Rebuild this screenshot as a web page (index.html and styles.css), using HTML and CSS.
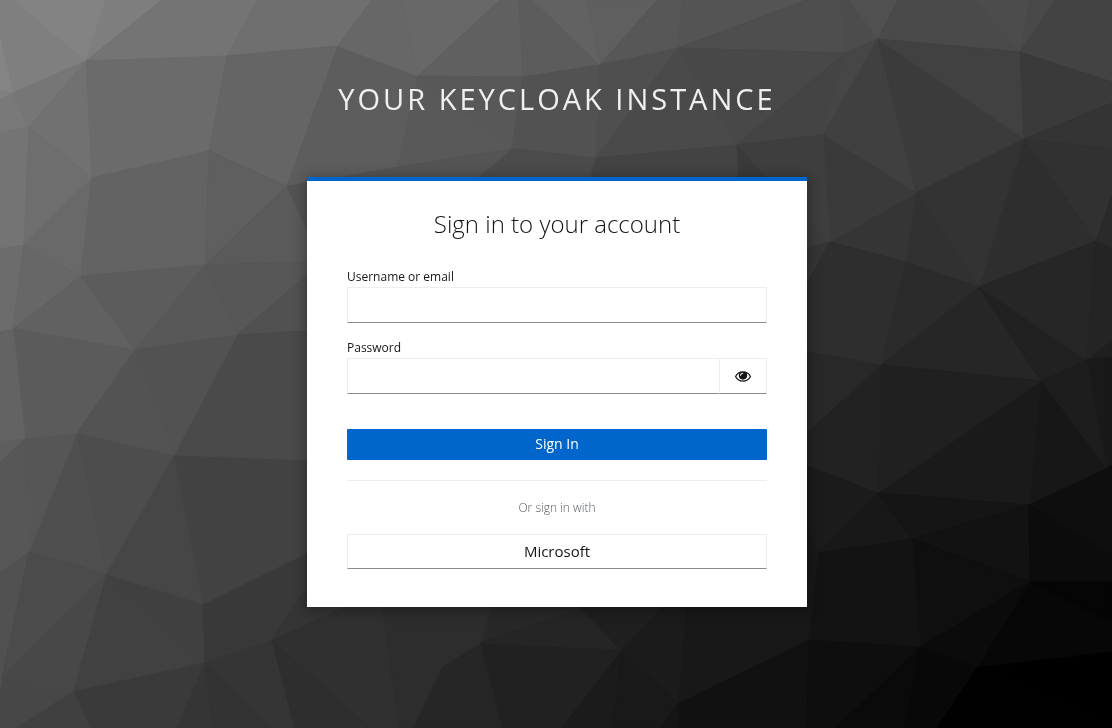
FILE: index.html
```html
<!DOCTYPE html>
<html lang="en">
<head>
<meta charset="utf-8">
<meta name="viewport" content="width=device-width, initial-scale=1">
<title>Sign in to your account</title>
<link rel="stylesheet" href="styles.css">
</head>
<body>
<svg class="backdrop" viewBox="0 0 1112 728" preserveAspectRatio="xMidYMid slice" aria-hidden="true">
<path color="#7f7f7f" d="M0 0 13 0 86 61 13 93 0 38z"/>
<path color="#838383" d="M13 0 106 0 86 61z"/>
<path color="#7e7e7e" d="M106 0 162 0 86 61z"/>
<path color="#747474" d="M162 0 258 0 227 56 86 61z"/>
<path color="#6f6f6f" d="M258 0 372 0 338 46 227 56z"/>
<path color="#858585" d="M0 38 13 93 0 91z"/>
<path color="#808080" d="M0 91 13 93 0 100z"/>
<path color="#797979" d="M0 100 13 93 29 127 0 133z"/>
<path color="#767676" d="M13 93 86 61 29 127z"/>
<path color="#717171" d="M86 61 92 178 29 127z"/>
<path color="#6b6b6b" d="M86 61 227 56 209 151 92 178z"/>
<path color="#656565" d="M227 56 338 46 287 186 209 151z"/>
<path color="#747474" d="M0 133 29 127 24 245 0 249z"/>
<path color="#6e6e6e" d="M29 127 92 178 24 245z"/>
<path color="#696969" d="M92 178 81 276 24 245z"/>
<path color="#636363" d="M92 178 209 151 205 265 81 276z"/>
<path color="#5f5f5f" d="M209 151 287 186 205 265z"/>
<path color="#5a5a5a" d="M287 186 320 250 307 262 205 265z"/>
<path color="#5d5d5d" d="M338 46 418 76 398 167 344 177 287 186z"/>
<path color="#676767" d="M338 46 372 0 402 0 418 76z"/>
<path color="#686868" d="M402 0 500 0 418 76z"/>
<path color="#606060" d="M500 0 519 0 523 77 418 76z"/>
<path color="#5c5c5c" d="M519 0 533 0 600 65 523 77z"/>
<path color="#626262" d="M533 0 587 0 600 65z"/>
<path color="#5f5f5f" d="M587 0 657 0 600 65z"/>
<path color="#575757" d="M657 0 682 0 678 48 600 65z"/>
<path color="#545454" d="M682 0 807 0 678 48z"/>
<path color="#4e4e4e" d="M807 0 841 0 845 53 678 48z"/>
<path color="#4c4c4c" d="M841 0 849 0 878 39 845 53z"/>
<path color="#505050" d="M849 0 898 0 878 39z"/>
<path color="#4a4a4a" d="M898 0 974 0 1020 52 878 39z"/>
<path color="#4c4c4c" d="M974 0 1031 0 1020 52z"/>
<path color="#494949" d="M1031 0 1055 0 1020 52z"/>
<path color="#434343" d="M1055 0 1112 0 1112 82 1020 52z"/>
<path color="#585858" d="M418 76 523 77 512 149z"/>
<path color="#595959" d="M418 76 512 149 398 167z"/>
<path color="#525252" d="M523 77 600 65 596 158 512 149z"/>
<path color="#4f4f4f" d="M600 65 678 48 596 158z"/>
<path color="#4a4a4a" d="M678 48 736 145 596 158z"/>
<path color="#484848" d="M678 48 845 53 736 145z"/>
<path color="#444444" d="M845 53 823 135 736 145z"/>
<path color="#464646" d="M845 53 878 39 823 135z"/>
<path color="#404040" d="M878 39 916 193 823 135z"/>
<path color="#3b3b3b" d="M878 39 1024 139 916 193z"/>
<path color="#414141" d="M878 39 1020 52 1024 139z"/>
<path color="#3a3a3a" d="M1020 52 1112 82 1112 103 1024 139z"/>
<path color="#343434" d="M1024 139 1112 103 1112 149z"/>
<path color="#313131" d="M1024 139 1112 149 1112 195 1096 241z"/>
<path color="#2e2e2e" d="M1024 139 1096 241 979 287z"/>
<path color="#333333" d="M1024 139 979 287 916 193z"/>
<path color="#313131" d="M916 193 979 287 906 262z"/>
<path color="#353535" d="M916 193 906 262 830 242z"/>
<path color="#3a3a3a" d="M823 135 916 193 830 242z"/>
<path color="#3e3e3e" d="M823 135 830 242 807 220 765 177 736 145z"/>
<path color="#3a3a3a" d="M736 145 765 177 738 177z"/>
<path color="#434343" d="M596 158 736 145 738 177 590 177z"/>
<path color="#4b4b4b" d="M512 149 596 158 590 177 478 177z"/>
<path color="#545454" d="M398 167 512 149 478 177 344 177z"/>
<path color="#535353" d="M287 186 344 177 344 230 307 230z"/>
<path color="#3c3c3c" d="M807 220 830 242 807 248z"/>
<path color="#353535" d="M807 248 830 242 807 284z"/>
<path color="#2e2e2e" d="M830 242 906 262 881 365 807 352 807 284z"/>
<path color="#2b2b2b" d="M906 262 979 287 881 365z"/>
<path color="#262626" d="M979 287 1041 381 881 365z"/>
<path color="#212121" d="M979 287 1087 360 1041 381z"/>
<path color="#262626" d="M979 287 1096 241 1087 360z"/>
<path color="#242424" d="M1096 241 1112 247 1112 341 1087 360z"/>
<path color="#2a2a2a" d="M1112 195 1112 247 1096 241z"/>
<path color="#1f1f1f" d="M1087 360 1112 341 1112 357z"/>
<path color="#191919" d="M1087 360 1112 357 1112 465 1106 469z"/>
<path color="#1d1d1d" d="M1041 381 1087 360 1106 469z"/>
<path color="#171717" d="M1041 381 1106 469 1029 505z"/>
<path color="#1a1a1a" d="M1041 381 1029 505 878 493z"/>
<path color="#202020" d="M881 365 1041 381 878 493z"/>
<path color="#222222" d="M881 365 878 493 807 466 807 432z"/>
<path color="#282828" d="M807 352 881 365 807 432z"/>
<path color="#1b1b1b" d="M807 466 878 493 818 553 807 530z"/>
<path color="#181818" d="M878 493 912 539 818 553z"/>
<path color="#151515" d="M878 493 1029 505 912 539z"/>
<path color="#121212" d="M912 539 1029 505 1030 582z"/>
<path color="#0f0f0f" d="M912 539 1030 582 920 647z"/>
<path color="#131313" d="M818 553 912 539 920 647 808 640z"/>
<path color="#0e0e0e" d="M1029 505 1106 469 1112 465 1112 556z"/>
<path color="#0c0c0c" d="M1029 505 1112 556 1112 582 1030 582z"/>
<path color="#050505" d="M1030 582 1112 582 1112 623z"/>
<path color="#070707" d="M1030 582 1112 623 1112 652 977 668z"/>
<path color="#0b0b0b" d="M1030 582 977 668 920 647z"/>
<path color="#080808" d="M920 647 977 668 937 728 905 728z"/>
<path color="#0a0a0a" d="M920 647 905 728 834 728z"/>
<path color="#0e0e0e" d="M808 640 920 647 834 728 806 728z"/>
<path color="#111111" d="M808 640 806 728 678 728 678 703z"/>
<path color="#000000" d="M977 668 1112 652 1112 728z"/>
<path color="#010101" d="M977 668 1112 728 937 728z"/>
<path color="#181818" d="M807 530 818 553 808 640 678 703 686 607z"/>
<path color="#1b1b1b" d="M662 607 686 607 678 703 621 650z"/>
<path color="#191919" d="M621 650 678 703 661 728 612 728z"/>
<path color="#151515" d="M678 703 678 728 661 728z"/>
<path color="#1b1b1b" d="M621 650 612 728 561 728z"/>
<path color="#212121" d="M480 643 621 650 561 728 502 728z"/>
<path color="#262626" d="M480 643 502 728 413 728 442 667z"/>
<path color="#282828" d="M491 606 581 606 581 609 480 643z"/>
<path color="#252525" d="M480 643 581 609 621 650z"/>
<path color="#1f1f1f" d="M578 606 662 606 621 650z"/>
<path color="#2d2d2d" d="M382 606 491 607 480 643 442 667 413 728 398 728z"/>
<path color="#303030" d="M271 640 346 606 382 606 398 728 370 728z"/>
<path color="#2e2e2e" d="M271 640 370 728 294 728z"/>
<path color="#353535" d="M205 662 271 640 294 728 272 728z"/>
<path color="#333333" d="M205 662 272 728 212 728z"/>
<path color="#353535" d="M205 662 212 728 176 728z"/>
<path color="#3a3a3a" d="M73 691 205 662 176 728 90 728z"/>
<path color="#404040" d="M15 728 73 691 90 728z"/>
<path color="#474747" d="M2 677 73 691 15 728 0 728 0 690z"/>
<path color="#414141" d="M106 574 205 662 73 691z"/>
<path color="#404040" d="M106 574 203 604 205 662z"/>
<path color="#393939" d="M203 604 307 553 307 587 271 640 205 662z"/>
<path color="#353535" d="M307 587 346 606 271 640z"/>
<path color="#424242" d="M174 455 307 460 307 553 203 604z"/>
<path color="#464646" d="M174 455 203 604 106 574z"/>
<path color="#4d4d4d" d="M77 433 174 455 106 574z"/>
<path color="#4f4f4f" d="M77 433 106 574 29 552z"/>
<path color="#565656" d="M25 438 77 433 29 552z"/>
<path color="#575757" d="M0 462 25 438 29 552 0 573z"/>
<path color="#5e5e5e" d="M0 441 25 438 0 462z"/>
<path color="#515151" d="M0 573 29 552 2 677 0 690z"/>
<path color="#4b4b4b" d="M29 552 106 574 2 677z"/>
<path color="#484848" d="M2 677 106 574 73 691z"/>
<path color="#6c6c6c" d="M0 249 24 245 13 329 0 332z"/>
<path color="#676767" d="M24 245 81 276 13 329z"/>
<path color="#616161" d="M81 276 135 350 13 329z"/>
<path color="#5c5c5c" d="M81 276 205 265 135 350z"/>
<path color="#585858" d="M205 265 237 335 135 350z"/>
<path color="#575757" d="M205 265 307 262 307 275 237 335z"/>
<path color="#515151" d="M237 335 307 275 307 331z"/>
<path color="#4a4a4a" d="M237 335 307 331 307 460 174 455z"/>
<path color="#525252" d="M135 350 237 335 174 455z"/>
<path color="#5b5b5b" d="M13 329 135 350 77 433 25 438z"/>
<path color="#535353" d="M135 350 174 455 77 433z"/>
<path color="#636363" d="M0 332 13 329 25 438 0 441z"/>
</svg>

<div class="page">
  <header class="realm">Your Keycloak Instance</header>
  <main class="card">
    <h1 class="title">Sign in to your account</h1>
    <form class="form">
      <div class="field">
        <label class="label" for="username">Username or email</label>
        <input class="input" id="username" name="username" type="text" autocomplete="username">
      </div>
      <div class="field">
        <label class="label" for="password">Password</label>
        <div class="input-group">
          <input class="input" id="password" name="password" type="password" autocomplete="current-password">
          <button class="reveal" type="button" aria-label="Show password">
            <svg class="eye" viewBox="0 0 576 384" aria-hidden="true">
              <path fill-rule="evenodd" d="M288 0C164 0 58 68 6 171a46 46 0 0 0 0 42C58 316 164 384 288 384s230-68 282-171a46 46 0 0 0 0-42C518 68 412 0 288 0zm0 340C184 340 92 284 46 192 72 140 112 100 160 74a150 150 0 0 0-24 84c0 84 68 150 152 150s152-66 152-150a150 150 0 0 0-24-84c48 26 88 66 114 118-46 92-138 148-242 148zM282 56c12 0 20 8 20 18s-8 18-20 18c-36 0-62 26-62 60 0 10-8 18-18 18s-18-8-18-18c0-54 44-96 98-96z"/>
            </svg>
          </button>
        </div>
      </div>
      <button class="submit" type="submit">Sign In</button>
    </form>
    <section class="social">
      <h2 class="social-title">Or sign in with</h2>
      <a class="provider" href="#microsoft">Microsoft</a>
    </section>
  </main>
</div>
</body>
</html>
```
FILE: styles.css
```css
* {
  box-sizing: border-box;
}

body {
  margin: 0;
  background: #3a3a3a;
  color: #151515;
  font-family: "Open Sans", "Noto Sans", sans-serif;
  font-size: 14px;
}

.backdrop {
  position: fixed;
  inset: 0;
  z-index: -1;
  width: 100%;
  height: 100%;
  fill: currentColor;
  stroke: currentColor;
  stroke-width: 1px;
  stroke-linejoin: round;
}

.page {
  display: flex;
  flex-direction: column;
  align-items: center;
  min-height: 100vh;
  padding-left: 2px;
}

.realm {
  padding: 79px 20px 59px;
  color: #f0f0f0;
  font-size: 29px;
  line-height: 39px;
  letter-spacing: 3px;
  text-align: center;
  text-transform: uppercase;
}

.card {
  width: 100%;
  max-width: 500px;
  padding: 27px 40px 38px;
  border-top: 4px solid #06c;
  background: #fff;
  box-shadow: 0 2px 12px 2px rgba(3, 3, 3, 0.3);
}

.title {
  margin: 0 0 28px;
  font-size: 24px;
  font-weight: 300;
  line-height: 32px;
  text-align: center;
}

.form {
  display: flex;
  flex-direction: column;
}

.field {
  display: flex;
  flex-direction: column;
  margin-bottom: 16px;
}

.label {
  padding-bottom: 1px;
  font-size: 12px;
  line-height: 18px;
}

.input,
.reveal,
.provider {
  border: 1px solid #ededed;
  border-bottom-color: #8a8d90;
  border-radius: 0;
  background: #fff;
  color: #151515;
  font-family: inherit;
}

.input {
  width: 100%;
  height: 36px;
  padding: 4px 8px;
  font-size: 16px;
}

.input-group {
  display: flex;
}

.input-group .input {
  flex: 1;
  border-right: 0;
}

.reveal {
  display: flex;
  align-items: center;
  justify-content: center;
  width: 48px;
  padding: 0;
}

.eye {
  width: 16px;
  height: 11px;
  fill: currentColor;
}

.submit {
  height: 31px;
  margin-top: 19px;
  padding: 0 0 2px;
  border: 0;
  border-radius: 1px;
  background: #06c;
  color: #fff;
  font-family: inherit;
  font-size: 14px;
  font-weight: 500;
  line-height: 29px;
}

.social {
  margin-top: 20px;
  border-top: 1px solid #ededed;
}

.social-title {
  margin: 17px 0;
  color: #55595e;
  font-size: 12px;
  font-weight: 300;
  line-height: 19px;
  text-align: center;
}

.provider {
  display: block;
  font-size: 15px;
  font-weight: 500;
  line-height: 33px;
  text-align: center;
  text-decoration: none;
}
```
